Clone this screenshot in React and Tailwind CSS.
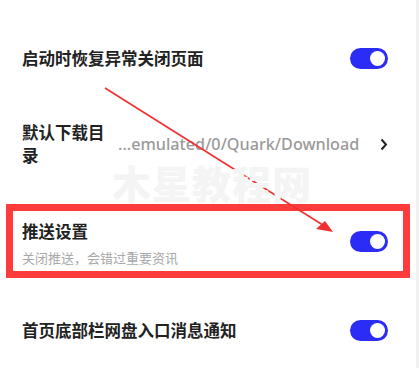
import React from 'react';

const font = { fontFamily: '"Noto Sans CJK SC", "Noto Sans", sans-serif' };

function Toggle() {
  return (
    <div className="w-[38px] h-[21px] rounded-full bg-[#2b2cf6] flex items-center justify-end pr-[3px] shrink-0">
      <div className="w-[15px] h-[15px] rounded-full bg-white" />
    </div>
  );
}

export default function App() {
  return (
    <div className="relative w-[419px] h-[368px] bg-white overflow-hidden flex" style={font}>
      <div className="w-[416px] flex flex-col">
        <div className="h-[116px] shrink-0 flex items-center justify-between pl-[22px] pr-[28px]">
          <span className="text-[16.5px] font-bold text-[#222]">启动时恢复异常关闭页面</span>
          <Toggle />
        </div>

        <div className="h-[56px] shrink-0 flex items-center pl-[22px] pr-[28px]">
          <span className="w-[92px] text-[16.5px] leading-[23px] font-bold text-[#222]">默认下载目录</span>
          <span className="ml-[4px] flex-1 text-[16.2px] text-[#9a9a9a] font-medium" style={{ fontFamily: '"Noto Sans", sans-serif' }}>
            ...emulated/0/Quark/Download
          </span>
          <svg width="8" height="13" viewBox="0 0 8 13" className="shrink-0">
            <path d="M1.5 1.5 L6 6.5 L1.5 11.5" fill="none" stroke="#222" strokeWidth="2" />
          </svg>
        </div>

        <div className="mt-[32px] shrink-0 mx-[6px] h-[74px] border-[7px] border-[#ff3b3b] flex justify-between pl-[9px] pr-[15px]">
          <div className="flex flex-col pt-[9px]">
            <span className="text-[16.5px] leading-[22px] font-bold text-[#222]">推送设置</span>
            <span className="mt-[8px] text-[13px] leading-[16px] text-[#a8a8a8]">关闭推送，会错过重要资讯</span>
          </div>
          <div className="self-center">
            <Toggle />
          </div>
        </div>

        <div className="h-[104px] shrink-0 flex items-center justify-between pl-[22px] pr-[28px]">
          <span className="text-[16.5px] font-bold text-[#222]">首页底部栏网盘入口消息通知</span>
          <Toggle />
        </div>
      </div>
      <div className="w-[3px] bg-[#f1f1f1]" />

      <svg className="absolute inset-0 pointer-events-none" width="419" height="368">
        <line x1="105" y1="88" x2="326" y2="227" stroke="#f03030" strokeWidth="1.6" />
        <polygon points="333,232 316,229 325,221" fill="#f03030" />
      </svg>

      <div className="absolute left-[112px] top-[158px] text-[39px] leading-[48px] font-black text-[#f4f4f4] tracking-[1px] pointer-events-none">
        木星教程网
      </div>
    </div>
  );
}
